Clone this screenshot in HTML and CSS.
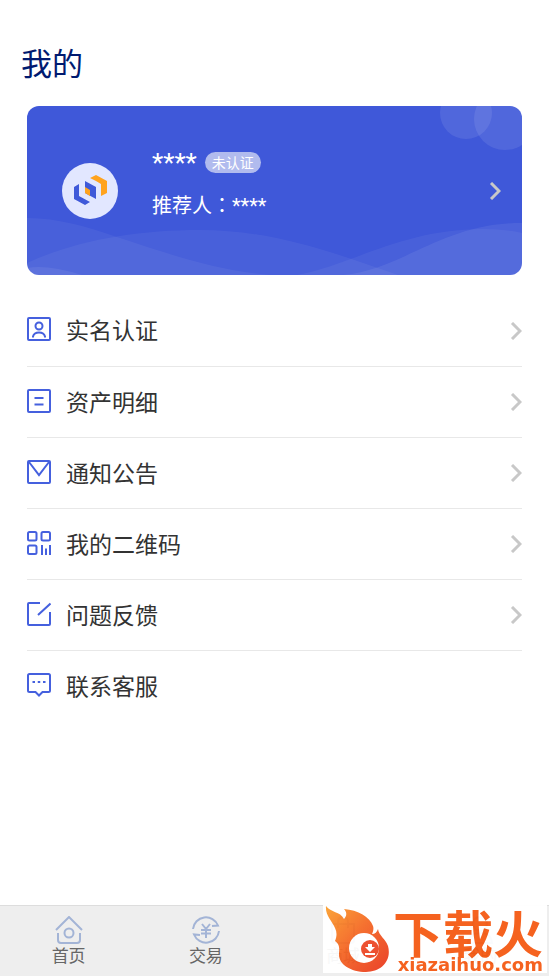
FILE: index.html
```
<!DOCTYPE html>
<html lang="zh-CN">
<head>
  <meta charset="UTF-8">
  <meta name="viewport" content="width=device-width, initial-scale=1.0">
  <title>我的</title>
  <link rel="stylesheet" href="styles.css">
</head>
<body>

  <header>
    <h1>我的</h1>
  </header>

  <main>
    <a class="card" href="#profile">
      <svg class="card-bg" viewBox="0 0 495 169" preserveAspectRatio="none" fill="#fff">
        <circle cx="439" cy="7" r="26" fill-opacity=".09"/>
        <circle cx="478" cy="13" r="31" fill-opacity=".09"/>
        <path fill-opacity=".05" d="M0 112C32 112 60 121 90 131C145 149 190 165 245 169H0Z"/>
        <path fill-opacity=".05" d="M0 157C50 134 110 124 173 124C245 124 305 146 371 169H0Z"/>
        <path fill-opacity=".07" d="M0 162Q20 158 55 169H0Z"/>
        <path fill-opacity=".05" d="M270 169C325 159 375 123 456 123Q477 123 495 127V169Z"/>
        <path fill-opacity=".07" d="M316 169C375 164 415 117 495 117V169Z"/>
      </svg>
      <span class="avatar">
        <svg width="36" height="36" viewBox="0 0 36 36">
          <path fill="#3f59d9" d="M2 14L7 11V23L18 29L13 32L2 26Z"/>
          <path fill="#3f59d9" d="M13 8L24 14V26L13 20Z"/>
          <path fill="#ffa31f" d="M13 14L18 17V23L13 20Z"/>
          <path fill="#ffa31f" d="M18 5L24 2L35 8V20L29 23V11L24 8Z"/>
        </svg>
      </span>
      <span class="info">
        <span class="name">**** <span class="badge">未认证</span></span>
        <span class="referrer">推荐人<span class="colon" lang="zh-TW">：</span>****</span>
      </span>
      <svg class="arrow" viewBox="0 0 12 18"><path d="M2 1L10 9L2 17"/></svg>
    </a>

    <ul class="menu">
      <li><a href="#auth">
        <svg class="icon" viewBox="0 0 24 24"><rect x="1" y="1" width="22" height="22" rx="1"/><circle cx="12" cy="9" r="3.500"/><path d="M6 20.500V19.500Q7 15.500 12 15.500T18 19.500V20.500"/></svg>
        <span>实名认证</span>
        <svg class="arrow" viewBox="0 0 12 18"><path d="M2 1L10 9L2 17"/></svg>
      </a></li>
      <li><a href="#assets">
        <svg class="icon" viewBox="0 0 24 24"><rect x="1" y="1" width="22" height="22" rx="1"/><path d="M7.500 9H16.500M7.500 15.500H16.500"/></svg>
        <span>资产明细</span>
        <svg class="arrow" viewBox="0 0 12 18"><path d="M2 1L10 9L2 17"/></svg>
      </a></li>
      <li><a href="#notice">
        <svg class="icon" viewBox="0 0 24 24"><rect x="1" y="1" width="22" height="22" rx="1"/><path d="M2 2L12 15L22 2"/></svg>
        <span>通知公告</span>
        <svg class="arrow" viewBox="0 0 12 18"><path d="M2 1L10 9L2 17"/></svg>
      </a></li>
      <li><a href="#qrcode">
        <svg class="icon" viewBox="0 0 24 24"><rect x="1" y="1" width="8.500" height="8.500" rx="1.500"/><rect x="14.500" y="1" width="8.500" height="8.500" rx="1.500"/><rect x="1" y="14.500" width="8.500" height="8.500" rx="1.500"/><path d="M15 14V24M19 17.500V24M23 14V24"/></svg>
        <span>我的二维码</span>
        <svg class="arrow" viewBox="0 0 12 18"><path d="M2 1L10 9L2 17"/></svg>
      </a></li>
      <li><a href="#feedback">
        <svg class="icon" viewBox="0 0 24 24"><path d="M13 1H2Q1 1 1 2V22Q1 23 2 23H22Q23 23 23 22V10M11 13L23.500 1.500"/></svg>
        <span>问题反馈</span>
        <svg class="arrow" viewBox="0 0 12 18"><path d="M2 1L10 9L2 17"/></svg>
      </a></li>
      <li><a href="#service">
        <svg class="icon" viewBox="0 0 24 24"><path d="M2.500 1H21.500Q23 1 23 2.500V17.500Q23 19 21.500 19H15.500L12 22.500L8.500 19H2.500Q1 19 1 17.500V2.500Q1 1 2.500 1Z"/><path d="M5.500 9H8M10.750 9H13.250M16 9H18.500"/></svg>
        <span>联系客服</span>
      </a></li>
    </ul>
  </main>

  <nav class="tabbar">
    <a href="#home">
      <svg viewBox="0 0 28 28"><path d="M1 14L14 1L27 14M3 17V24Q3 27 6 27H22Q25 27 25 24V17"/><circle cx="14" cy="17" r="4.500"/></svg>
      <span>首页</span>
    </a>
    <a href="#trade">
      <svg viewBox="0 0 28 28"><path d="M1 13A13 13 0 0 1 26 9.500L20 10M27 15A13 13 0 0 1 2 18.500L8 19M10 8L14 13L18 8M9 14H19M9 17.500H19M14 13V22"/></svg>
      <span>交易</span>
    </a>
    <a href="#mall">
      <svg viewBox="0 0 28 28"><path d="M3 8H25V24Q25 27 22 27H6Q3 27 3 24ZM9 12V6Q9 1 14 1T19 6V12"/></svg>
      <span>商城</span>
    </a>
    <a href="#mine">
      <svg viewBox="0 0 28 28"><circle cx="14" cy="8" r="7"/><path d="M2 27Q3 17 14 17T26 27Z"/></svg>
      <span>我的</span>
    </a>
  </nav>

  <div class="site-mark">
    <svg width="68" height="68" viewBox="0 0 68 68">
      <defs>
        <linearGradient id="flame" x1="0" y1="0" x2="1" y2="1">
          <stop offset="0" stop-color="#fba02f"/>
          <stop offset=".45" stop-color="#f56a25"/>
          <stop offset="1" stop-color="#e9371f"/>
        </linearGradient>
      </defs>
      <path fill="url(#flame)" d="M3 1C8 8 17 6 21 14C24 11 24 7 21 4C35 5 47 12 50 21C51 24 50 27 49 29C52 29 54 27 55 24C56 31 62 33 65 41C69 56 58 67 43 67C27 67 15 59 16 48C17 41 15 38 12 36C14 31 14 27 12 23C9 16 2 10 3 1Z"/>
      <circle cx="41" cy="43" r="15" fill="#fff"/>
      <circle cx="47" cy="44" r="9" fill="#ec4826"/>
      <path fill="#fff" d="M45 39H49V42H52L47 47L42 42H45ZM42 48H52V50H42Z"/>
    </svg>
    <div class="site-text">
      <span class="site-name">下载火</span>
      <span class="site-url">xiazaihuo.com</span>
    </div>
  </div>

</body>
</html>
```
FILE: styles.css
```
* {
  box-sizing: border-box;
}
body {
  font-family: "Noto Sans CJK SC", sans-serif;
  background-color: #fff;
  color: #333;
  margin: 0;
  min-height: 100vh;
  padding-bottom: 72px;
}
a {
  color: inherit;
  text-decoration: none;
}
header {
  padding: 39px 21px 21px;
}
h1 {
  margin: 0;
  font-size: 31px;
  line-height: 46px;
  font-weight: 400;
  color: #001a70;
}
main {
  padding: 0 27px;
}
.card {
  position: relative;
  display: flex;
  align-items: center;
  min-height: 169px;
  padding: 0 21px 0 35px;
  border-radius: 12px;
  background-color: #3f58d9;
  color: #fff;
  overflow: hidden;
}
.card-bg {
  position: absolute;
  top: 0;
  left: 0;
  width: 100%;
  height: 100%;
}
.card .avatar,
.card .info,
.card .arrow {
  position: relative;
}
.avatar {
  display: flex;
  align-items: center;
  justify-content: center;
  width: 56px;
  height: 56px;
  border-radius: 50%;
  background-color: #e2e7ff;
}
.info {
  display: flex;
  flex-direction: column;
  gap: 20px;
  flex: 1;
  margin-left: 34px;
  padding-bottom: 11px;
  font-family: Roboto, "Noto Sans CJK SC", sans-serif;
}
.name {
  display: flex;
  align-items: flex-start;
  gap: 8px;
  font-size: 26px;
  line-height: 22px;
}
.badge {
  padding: 0 7px;
  border-radius: 11px;
  background-color: #b1bbee;
  font-family: "Noto Sans CJK SC", sans-serif;
  font-size: 14px;
  line-height: 21px;
}
.referrer {
  font-size: 20px;
  line-height: 24px;
}
.colon {
  font-family: "Noto Sans CJK TC", sans-serif;
  line-height: 1;
}
.arrow {
  width: 12px;
  height: 18px;
  fill: none;
  stroke: #c8c8c8;
  stroke-width: 3;
}
.menu {
  list-style: none;
  margin: 20px 0 0;
  padding: 0;
}
.menu a {
  display: flex;
  align-items: center;
  height: 71px;
  font-size: 23px;
  line-height: 34px;
}
.menu li + li a {
  border-top: 1px solid #e8e8e8;
}
.menu span {
  flex: 1;
  margin-left: 15px;
  padding-bottom: 3px;
}
.icon {
  width: 24px;
  height: 24px;
  margin-bottom: 3px;
  fill: none;
  stroke: #4560de;
  stroke-width: 2;
}
.tabbar {
  position: fixed;
  left: 0;
  right: 0;
  bottom: 0;
  display: flex;
  height: 71px;
  border-top: 1px solid #ddd;
  background-color: #eee;
}
.tabbar a {
  flex: 1;
  display: flex;
  flex-direction: column;
  align-items: center;
  padding-top: 10px;
  font-size: 17px;
  line-height: 22px;
  color: #666;
}
.tabbar svg {
  width: 28px;
  height: 28px;
  fill: none;
  stroke: #a3b4d6;
  stroke-width: 2;
}
.site-mark {
  position: fixed;
  right: 2px;
  bottom: 3px;
  display: flex;
  width: 224px;
  height: 68px;
  background-color: #fff;
  opacity: .95;
}
.site-text {
  display: flex;
  flex-direction: column;
  align-items: flex-end;
  justify-content: flex-end;
  flex: 1;
  padding-right: 4px;
  color: #f55a14;
  white-space: nowrap;
}
.site-name {
  font-size: 50px;
  line-height: 52px;
  font-weight: 700;
}
.site-url {
  font-family: "DejaVu Sans", sans-serif;
  font-size: 18px;
  line-height: 16px;
  font-weight: 700;
}
```
